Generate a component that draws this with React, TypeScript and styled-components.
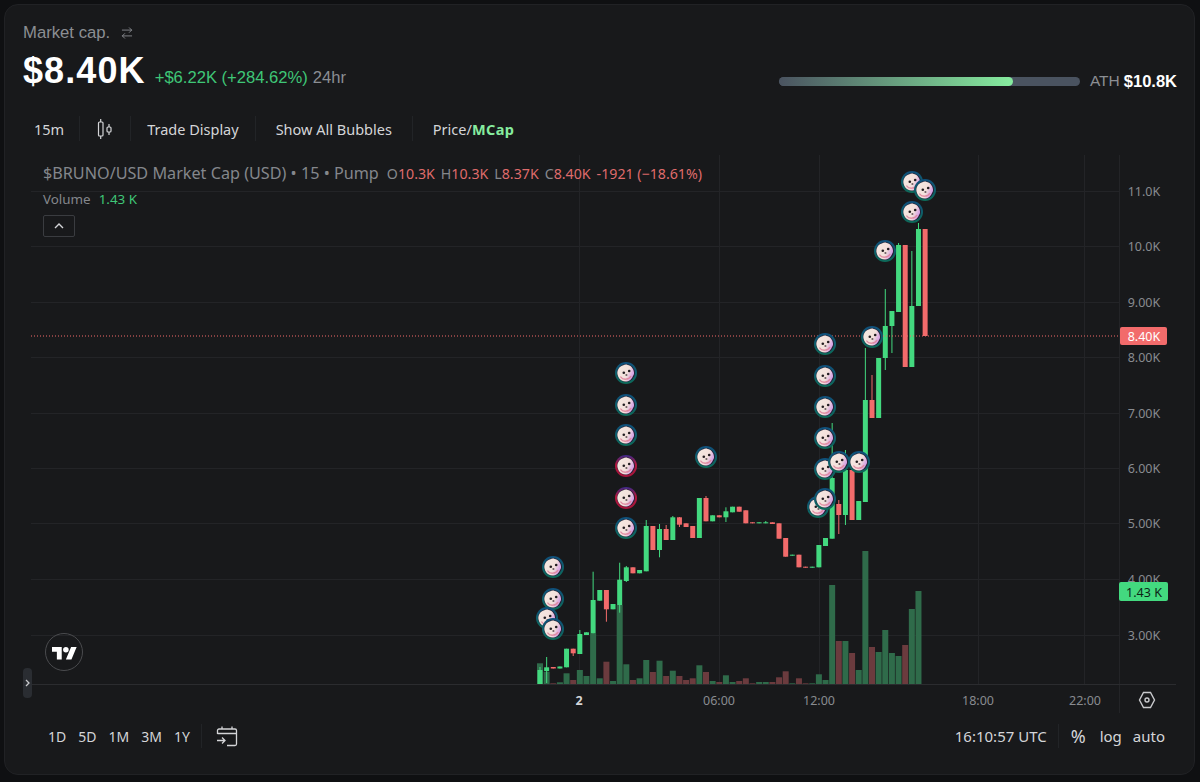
import React from 'react'
import styled, { createGlobalStyle } from 'styled-components'
import { ArrowRightLeft } from 'lucide-react'

const chartFont = `'Noto Sans', 'Liberation Sans', sans-serif`
const uiFont = `'Liberation Sans', Arial, sans-serif`

const GREEN = '#43d97f'
const RED = '#f26b6b'

const GlobalStyle = createGlobalStyle`
  html, body {
    margin: 0;
    padding: 0;
    background: #0f1012;
  }
`

const Page = styled.div`
  width: 1200px;
  height: 782px;
  padding: 4px 5px 7px 4px;
  box-sizing: border-box;
  overflow: hidden;
`

const Panel = styled.div`
  height: 100%;
  box-sizing: border-box;
  background: #18191b;
  border: 1px solid #212225;
  border-radius: 14px;
  padding-top: 18px;
  display: flex;
  flex-direction: column;
`

const Header = styled.div`
  display: flex;
  justify-content: space-between;
  align-items: flex-end;
  padding: 0 17px 2px 18px;
  font-family: ${uiFont};
`

const Label = styled.div`
  display: flex;
  align-items: center;
  gap: 10px;
  height: 20px;
  font-size: 16.7px;
  color: #8b8e93;
`

const ValueRow = styled.div`
  display: flex;
  align-items: baseline;
  margin-top: 8px;
  height: 40px;
  line-height: 40px;
`

const Value = styled.div`
  font-size: 36px;
  font-weight: 700;
  letter-spacing: 1.1px;
  color: #fff;
  margin-right: 9px;
`

const Change = styled.span`
  font-size: 16.6px;
  color: #3fc677;
  margin-right: 5px;
`

const Period = styled.span`
  font-size: 16.6px;
  color: #8b8e93;
`

const Ath = styled.div`
  display: flex;
  align-items: center;
  gap: 10px;
  height: 20px;
  font-size: 15.5px;
  color: #8b8e93;
`

const AthValue = styled.b`
  font-size: 16.5px;
  color: #fff;
  margin-left: -6px;
`

const Track = styled.div`
  width: 301px;
  height: 9px;
  border-radius: 5px;
  background: #4a5360;
  overflow: hidden;
`

const Fill = styled.div`
  height: 100%;
  border-radius: 5px;
  background: linear-gradient(90deg, #4a5360 0%, #86ec9f 100%);
`

const Toolbar = styled.div`
  display: flex;
  align-items: center;
  height: 25px;
  margin-top: 23px;
  padding-left: 13px;
  font-family: ${chartFont};
  font-size: 14.5px;
  color: #d4d5d8;
`

const ToolItem = styled.div<{ $pad?: number }>`
  display: flex;
  align-items: center;
  padding: 0 ${(p) => p.$pad ?? 16}px;
  white-space: nowrap;
`

const FirstItem = styled(ToolItem)`
  padding-right: 15px;
`

const Sep = styled.div`
  width: 1px;
  height: 25px;
  background: #222427;
`

const Accent = styled.b`
  color: #86ec9f;
  letter-spacing: 0.4px;
`

const ChartFrame = styled.div`
  position: relative;
  width: 1145px;
  height: 558px;
  margin: 14px 0 0 26px;
`

const ChartSvg = styled.svg`
  display: block;
`

const AxisText = styled.text<{ $color?: string }>`
  font-family: ${chartFont};
  font-size: 12.5px;
  fill: ${(p) => p.$color ?? '#888b90'};
  text-anchor: middle;
  dominant-baseline: central;
`

const Legend = styled.div`
  position: absolute;
  left: 12px;
  top: 8px;
  font-family: ${chartFont};
  color: #84878c;
`

const LegendRow = styled.div`
  display: flex;
  align-items: baseline;
  height: 20px;
  line-height: 20px;
  font-size: 14.2px;
  white-space: nowrap;
`

const Title = styled.span`
  font-size: 16.2px;
  margin-right: 8px;
`

const Ohlc = styled.span`
  margin-right: 6px;
`

const Down = styled.span`
  color: #df6b6b;
`

const VolumeRow = styled(LegendRow)`
  margin-top: 6px;
  font-size: 13.4px;
`

const VolumeValue = styled.span`
  color: #3fc677;
  margin-left: 8px;
`

const Collapse = styled.div`
  width: 30px;
  height: 20px;
  margin-top: 6px;
  border: 1px solid #3a3c40;
  border-radius: 2px;
  display: flex;
  align-items: center;
  justify-content: center;
  color: #d4d5d8;
`

const TvBadge = styled.div`
  position: absolute;
  left: 14px;
  top: 478px;
  width: 36px;
  height: 36px;
  border: 1px solid #4a4b4e;
  border-radius: 50%;
  display: flex;
  align-items: center;
  justify-content: center;
`

const SideTab = styled.div`
  position: absolute;
  left: -8px;
  top: 513px;
  width: 9px;
  height: 30px;
  border-radius: 4px;
  background: #2a2d32;
  display: flex;
  align-items: center;
  justify-content: center;
  color: #c8c9cc;
`

const RangeBar = styled.div`
  display: flex;
  align-items: center;
  justify-content: space-between;
  height: 24px;
  margin-top: 11px;
  padding: 0 29px 0 43px;
  font-family: ${chartFont};
  font-size: 14px;
  color: #d4d5d8;
`

const BarGroup = styled.div`
  display: flex;
  align-items: center;
`

const RightGroup = styled(BarGroup)`
  font-size: 15px;
`

const Range = styled.span`
  margin-right: 12px;
`

const BarSep = styled.div<{ $gap: number }>`
  width: 1px;
  height: 24px;
  margin: 0 ${(p) => p.$gap}px 0 ${(p) => p.$gap - 1}px;
  background: #222427;
`

const CalendarIcon = styled.svg`
  margin-left: 2px;
`

const Percent = styled.span`
  font-size: 18px;
  margin-right: 14px;
`

const Log = styled.span`
  margin-right: 11px;
`

type Candle = [number, number, number?, number?]

// [bodyTop, bodyBottom, wickTop, wickBottom], one per 15m bar, page pixels
const up: Record<number, Candle> = {
  0: [670, 684, 667], 1: [667.3, 671, 657, 683], 3: [666.5, 668.5], 4: [648.7, 667.3], 6: [634, 654, 630],
  7: [632.3, 635], 8: [600, 633.3, 571.7], 9: [590, 600.7], 11: [604, 609.3], 12: [579.7, 605, 562.7, 612.7],
  13: [567.3, 581, 566, 582], 15: [570, 573.3], 16: [526, 571.3, 520], 18: [529, 550, 524, 557.3], 20: [517.3, 540, 516],
  24: [498, 538], 26: [515.3, 521.3], 28: [511.3, 517.3, 507.3, 522], 29: [506.7, 512.3], 33: [522.3, 523.3],
  34: [522.3, 523.3, 521], 38: [554.7, 555.7], 41: [566.7, 567.7], 42: [545, 567.3], 43: [538, 546],
  44: [478, 538.7, 423], 46: [470, 515, 450, 525], 48: [501, 520], 49: [400, 502, 348], 51: [358, 418],
  52: [326, 358, 289, 370], 53: [311, 326, 311, 353], 54: [245, 312, 243], 56: [306, 367, 251], 57: [229, 306, 223],
}

const down: Record<number, Candle> = {
  2: [667, 668.5], 5: [648.7, 653.3, 648.7, 656], 10: [590, 609.3, 590, 621.7], 14: [567.3, 573.3], 17: [526, 550],
  19: [529, 540, 525], 21: [517.3, 524.7, 517, 527], 22: [523.3, 527], 23: [526, 538], 25: [498, 521.3, 496],
  27: [515.3, 517.3], 30: [506.7, 511.7], 31: [510.3, 523.3], 32: [522.3, 523.3], 35: [522.3, 524], 36: [523.3, 538.7],
  37: [538, 556.7], 39: [554.7, 567.3], 40: [566.7, 567.7], 45: [504, 515, 500, 534], 47: [470, 520], 50: [400, 418, 375],
  55: [245, 367], 58: [229, 336],
}

const volumes = [
  20.7, 12.3, 0.7, 1.7, 10.7, 4, 14, 8, 50.7, 5.7, 22.3, 3, 79, 19.7, 4, 5.7, 24, 12, 23.3, 8, 13.3, 8, 4, 5.7, 18.7, 12,
  3, 2, 8.7, 2, 3, 5.7, 0.7, 2, 2, 2, 6.7, 12.7, 0.7, 5.7, 0.7, 0.7, 9.7, 4, 99, 43, 43, 31, 14, 133, 37, 32, 54, 31, 28,
  39, 75, 93,
]

const barX = (i: number) => 540 + 6.64 * i

const prices = [
  ['11.0K', 191], ['10.0K', 246], ['9.00K', 302], ['8.00K', 357], ['7.00K', 413], ['6.00K', 468], ['5.00K', 523],
  ['4.00K', 579], ['3.00K', 635],
] as const

const times = [
  ['2', 579], ['06:00', 719], ['12:00', 819], ['18:00', 978], ['22:00', 1085],
] as const

const bubbles: [number, number, boolean?][] = [
  [626, 373], [626, 405], [626, 435], [626, 466, true], [626, 498, true], [626, 528], [706, 457], [553, 567], [553, 599],
  [547, 618], [553, 629], [912, 182], [925, 190], [912, 212], [885, 251], [872, 337], [825, 344], [825, 376], [825, 407],
  [825, 438], [825, 469], [839, 462], [859, 462], [818, 507], [825, 499],
]

const Bubble = ({ x, y, sell }: { x: number; y: number; sell?: boolean }) => (
  <g transform={`translate(${x} ${y})`}>
    <circle r="11" fill={sell ? 'url(#ringSell)' : 'url(#ringBuy)'} />
    <circle r="9" fill="#241f33" />
    <path
      d="M-8.6 1c-.4-4 2-8 6-8.8 1-.7 3-.9 4.2-.3 3.4.4 6.2 3.8 6.4 7.6.2 1.4-.4 2.6-1 3.6-.8 2.6-3 4.8-6 5.3-1.6.4-3.4.2-4.8-.6-2.4-1-4.2-3.4-4.8-6.8z"
      fill="url(#fur)"
    />
    <path d="M-5.2 4c1.8 3 8 3 10-.6" fill="none" stroke="#e08aa2" strokeWidth="1.4" strokeLinecap="round" />
    <circle cx="-2.2" cy="-0.2" r="1.3" fill="#221c20" />
    <circle cx="3.2" cy="-2" r="1.3" fill="#221c20" />
    <ellipse cx="0.4" cy="2" rx="1.1" ry="0.8" fill="#3c3034" />
  </g>
)

const Chart = () => (
  <ChartSvg width="1145" height="558" viewBox="31 155 1145 558">
    <defs>
      <linearGradient id="ringBuy" x1="0" y1="0" x2="0" y2="1">
        <stop offset="0" stopColor="#0f4f7c" />
        <stop offset="1" stopColor="#0d6a58" />
      </linearGradient>
      <linearGradient id="ringSell" x1="0" y1="0" x2="0" y2="1">
        <stop offset="0" stopColor="#3a2a8a" />
        <stop offset="0.4" stopColor="#b0173f" />
        <stop offset="1" stopColor="#a5143a" />
      </linearGradient>
      <linearGradient id="fur" x1="0" y1="0" x2="1" y2="0.4">
        <stop offset="0" stopColor="#f4e9e2" />
        <stop offset="0.7" stopColor="#f3e0db" />
        <stop offset="1" stopColor="#d7a2e4" />
      </linearGradient>
    </defs>

    {prices.map(([, y]) => (
      <line key={y} x1="31" x2="1119" y1={y + 0.5} y2={y + 0.5} stroke="#232427" />
    ))}
    {times.map(([, x]) => (
      <line key={x} x1={x === 1085 ? 1084.5 : x + 0.5} x2={x === 1085 ? 1084.5 : x + 0.5} y1="155" y2="684" stroke="#232427" />
    ))}
    <line x1="1119.5" x2="1119.5" y1="155" y2="713" stroke="#232427" />
    <line x1="31" x2="1176" y1="684.5" y2="684.5" stroke="#2b2c2f" />

    {volumes.map((h, i) => (
      <rect key={i} x={barX(i) - 3} y={684 - h} width="6" height={h} fill={down[i] ? '#6b3b3e' : '#2f6b4a'} />
    ))}

    {[
      { set: up, color: GREEN },
      { set: down, color: RED },
    ].map(({ set, color }) =>
      Object.entries(set).map(([i, [top, bottom, wickTop, wickBottom]]) => {
        const x = barX(Number(i))
        return (
          <g key={i} fill={color}>
            <rect x={x - 0.5} y={wickTop ?? top} width="1" height={(wickBottom ?? bottom) - (wickTop ?? top)} />
            <rect x={x - 2.5} y={top} width="5" height={bottom - top} />
          </g>
        )
      })
    )}

    <line x1="31" x2="1119" y1="336" y2="336" stroke="#f26b6b" strokeDasharray="1 2" />

    {bubbles.map(([x, y, sell]) => (
      <Bubble key={`${x}-${y}`} x={x} y={y} sell={sell} />
    ))}

    {prices.map(([label, y]) => (
      <AxisText key={label} x="1144" y={y}>
        {label}
      </AxisText>
    ))}
    {times.map(([label, x]) => (
      <AxisText key={label} x={x} y="700" fontWeight={label === '2' ? 700 : 400} $color={label === '2' ? '#d4d5d8' : undefined}>
        {label}
      </AxisText>
    ))}

    <rect x="1120" y="327" width="47" height="18" rx="2" fill="#f26b6b" />
    <AxisText x="1144" y="336" $color="#fff">
      8.40K
    </AxisText>
    <rect x="1119" y="582" width="49" height="19" rx="2" fill="#43d97f" />
    <AxisText x="1144" y="592" $color="#0d2416">
      1.43 K
    </AxisText>

    <g fill="none" stroke="#c8c9cc" strokeWidth="1.4">
      <path d="M1143.5 692.5h7l4 7.5-4 7.5h-7l-4-7.5z" />
      <circle cx="1147" cy="700" r="2" />
    </g>
  </ChartSvg>
)

const App = () => (
  <Page>
    <GlobalStyle />
    <Panel>
      <Header>
        <div>
          <Label>
            Market cap.
            <ArrowRightLeft size={14} strokeWidth={1.5} />
          </Label>
          <ValueRow>
            <Value>$8.40K</Value>
            <Change>+$6.22K (+284.62%)</Change>
            <Period>24hr</Period>
          </ValueRow>
        </div>
        <Ath>
          <Track>
            <Fill style={{ width: `${(234 / 301) * 100}%` }} />
          </Track>
          ATH
          <AthValue>$10.8K</AthValue>
        </Ath>
      </Header>

      <Toolbar>
        <FirstItem>15m</FirstItem>
        <Sep />
        <ToolItem $pad={17}>
          <svg width="16" height="24" viewBox="0 0 16 24" fill="none" stroke="#d4d5d8" strokeWidth="1.2">
            <rect x="1.5" y="5" width="4.5" height="14" rx="1" />
            <path d="M3.7 2v3M3.7 19v3M12 7v3M12 15v3" />
            <rect x="10" y="10" width="4" height="5" rx="1" />
          </svg>
        </ToolItem>
        <Sep />
        <ToolItem>Trade Display</ToolItem>
        <Sep />
        <ToolItem $pad={20}>Show All Bubbles</ToolItem>
        <Sep />
        <ToolItem $pad={20}>
          Price/<Accent>MCap</Accent>
        </ToolItem>
      </Toolbar>

      <ChartFrame>
        <Chart />
        <Legend>
          <LegendRow>
            <Title>$BRUNO/USD Market Cap (USD) • 15 • Pump</Title>
            <Ohlc>
              O<Down>10.3K</Down>
            </Ohlc>
            <Ohlc>
              H<Down>10.3K</Down>
            </Ohlc>
            <Ohlc>
              L<Down>8.37K</Down>
            </Ohlc>
            <Ohlc>
              C<Down>8.40K</Down>
            </Ohlc>
            <Down>-1921 (−18.61%)</Down>
          </LegendRow>
          <VolumeRow>
            Volume
            <VolumeValue>1.43 K</VolumeValue>
          </VolumeRow>
          <Collapse>
            <svg width="10" height="6" viewBox="0 0 10 6" fill="none" stroke="currentColor" strokeWidth="1.4">
              <path d="M1 5l4-4 4 4" />
            </svg>
          </Collapse>
        </Legend>
        <TvBadge>
          <svg width="25" height="17" viewBox="0 0 36 24" fill="#fff">
            <path d="M14 22H7V11H0V4h14v18zM28 22h-8l7.5-18h8L28 22z" />
            <circle cx="20" cy="8" r="4" />
          </svg>
        </TvBadge>
        <SideTab>
          <svg width="5" height="8" viewBox="0 0 5 8" fill="none" stroke="currentColor" strokeWidth="1.3">
            <path d="M1 1l3 3-3 3" />
          </svg>
        </SideTab>
      </ChartFrame>

      <RangeBar>
        <BarGroup>
          <Range>1D</Range>
          <Range>5D</Range>
          <Range>1M</Range>
          <Range>3M</Range>
          <span>1Y</span>
          <BarSep $gap={12} />
          <CalendarIcon width="22" height="22" viewBox="0 0 22 22" fill="none" stroke="#d4d5d8" strokeWidth="1.3">
            <path d="M1.5 9V5.5A1.5 1.5 0 0 1 3 4h16a1.5 1.5 0 0 1 1.5 1.5V19a1.5 1.5 0 0 1-1.5 1.500h-8M1.5 8.500h19M6 1.5V4M16 1.5V4" />
            <path d="M1 15.5h8M6 12.5l3 3-3 3" />
          </CalendarIcon>
        </BarGroup>
        <RightGroup>
          <span>16:10:57 UTC</span>
          <BarSep $gap={12} />
          <Percent>%</Percent>
          <Log>log</Log>
          <span>auto</span>
        </RightGroup>
      </RangeBar>
    </Panel>
  </Page>
)

export default App
